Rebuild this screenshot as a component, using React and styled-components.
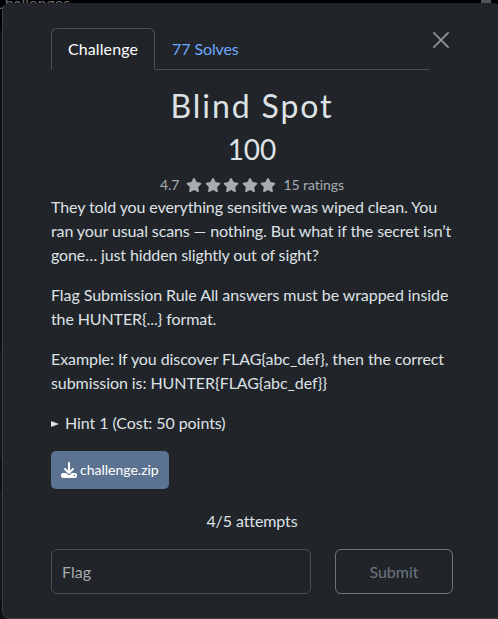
import React from "react";
import styled, { createGlobalStyle } from "styled-components";
import { FaStar, FaDownload } from "react-icons/fa6";

const GlobalStyle = createGlobalStyle`
  *, *::before, *::after { box-sizing: border-box; }
  html, body { margin: 0; height: 100%; overflow: hidden; background: #000; }
  body { font: 400 16px/24px Lato, sans-serif; color: #dee2e6; font-variant-ligatures: none; }
`;

const Page = styled.div`
  position: relative;
  width: 498px;
  height: 619px;
  overflow: hidden;
  background: #0e1011;
`;

const PageHeading = styled.div`
  height: 31px;
  text-indent: -6px;
  background: #000;
  color: #666;
  line-height: 6px;
`;

const Card = styled.div`
  width: 100%;
  height: ${(p) => p.$height}px;
  margin-bottom: ${(p) => p.$gap}px;
  background: ${(p) => (p.$dim ? "#0e1011" : "#16181b")};
`;

const ScrollThumb = styled.div`
  position: absolute;
  top: 0;
  right: 7px;
  width: 10px;
  height: 4px;
  background: #555;
`;

const Modal = styled.section`
  position: absolute;
  top: 3px;
  left: 2px;
  width: 500px;
  height: 616px;
  padding: 24px 48px;
  border: 1px solid #3b3d41;
  border-top-color: #212529;
  border-radius: 8px;
  background: #212529;
`;

const Header = styled.header`
  display: flex;
  height: 42px;
`;

const Tabs = styled.nav`
  display: flex;
  width: 378px;
  border-bottom: 1px solid #495057;
`;

const Tab = styled.a`
  height: 42px;
  padding: 8px 16px;
  border: 1px solid ${(p) => (p.$active ? "#495057" : "transparent")};
  border-bottom-color: ${(p) => (p.$active ? "#212529" : "transparent")};
  border-radius: 6px 6px 0 0;
  color: ${(p) => (p.$active ? "#fff" : "#6ea8fe")};
  letter-spacing: ${(p) => (p.$active ? "0.1px" : "-0.1px")};
`;

const Close = styled.button`
  width: 16px;
  height: 16px;
  margin: 4px 0 0 4px;
  padding: 0;
  border: 0;
  background: none;
  color: #909294;
  svg { display: block; }
`;

const Title = styled.h2`
  margin: 17px 0 7px;
  font-weight: 400;
  font-size: 32px;
  line-height: 38px;
  letter-spacing: 1.9px;
  text-align: center;
`;

const Points = styled.h3`
  margin: 0 0 8px;
  font-weight: 400;
  font-size: 28px;
  line-height: 34px;
  text-align: center;
`;

const Rating = styled.div`
  display: flex;
  align-items: center;
  justify-content: center;
  height: 21px;
  color: #a7acb1;
  font-size: 14px;
  line-height: 21px;
  letter-spacing: -0.07px;
`;

const Stars = styled.span`
  display: flex;
  gap: 2.5px;
  margin: 0 7px;
`;

const Text = styled.p`
  margin: 0 0 16px;
  white-space: nowrap;
`;

const Line = styled.span`
  display: block;
  letter-spacing: ${(p) => p.$tracking}px;
`;

const Hint = styled.details`
  margin-bottom: 16px;
`;

const Summary = styled.summary`
  display: flex;
  align-items: center;
  gap: 6px;
  list-style: none;
  letter-spacing: -0.07px;
  &::before {
    content: "";
    margin-top: 1px;
    border-left: 8px solid #dee2e6;
    border-top: 3.5px solid transparent;
    border-bottom: 3.5px solid transparent;
  }
`;

const FileButton = styled.a`
  display: flex;
  align-items: center;
  gap: 3px;
  width: 118px;
  height: 38px;
  padding: 0 10px;
  border-radius: 5px;
  background: #5b7290;
  color: #fff;
  font-size: 14px;
`;

const Attempts = styled.div`
  margin: 20px 0 16px;
  text-align: center;
  letter-spacing: -0.1px;
`;

const Form = styled.form`
  display: flex;
  gap: 24px;
`;

const FlagInput = styled.input`
  width: 260px;
  height: 45px;
  padding: 0 10px;
  border: 1px solid #495057;
  border-radius: 6px;
  background: #212529;
  color: #dee2e6;
  font: inherit;
  &::placeholder { color: #a6abaf; opacity: 1; }
`;

const Submit = styled.button`
  width: 118px;
  height: 45px;
  padding: 0;
  border: 1px solid #6c757d;
  border-radius: 6px;
  background: transparent;
  color: #6c757d;
  font: inherit;
`;

export default function App() {
  return (
    <>
      <GlobalStyle />
      <Page>
        <PageHeading>Challenges</PageHeading>
        <Card $dim $height={320} $gap={0} />
        <Card $height={108} $gap={32} />
        <Card $height={108} $gap={20} />
        <ScrollThumb />
        <Modal>
          <Header>
            <Tabs>
              <Tab $active>Challenge</Tab>
              <Tab>77 Solves</Tab>
            </Tabs>
            <Close aria-label="Close">
              <svg width="16" height="16" viewBox="0 0 16 16" stroke="currentColor" strokeWidth="1.8" strokeLinecap="round">
                <path d="M.9.9l14.2 14.2M15.1.9L.9 15.1" />
              </svg>
            </Close>
          </Header>
          <Title>Blind Spot</Title>
          <Points>100</Points>
          <Rating>
            4.7
            <Stars>
              {[1, 2, 3, 4, 5].map((n) => (
                <FaStar key={n} size={16} />
              ))}
            </Stars>
            15 ratings
          </Rating>
          <Text>
            <Line $tracking={-0.1}>They told you everything sensitive was wiped clean. You</Line>
            <Line $tracking={-0.11}>ran your usual scans — nothing. But what if the secret isn’t</Line>
            <Line $tracking={-0.12}>gone… just hidden slightly out of sight?</Line>
          </Text>
          <Text>
            <Line $tracking={-0.07}>Flag Submission Rule All answers must be wrapped inside</Line>
            <Line $tracking={-0.12}>the HUNTER&#123;...&#125; format.</Line>
          </Text>
          <Text>
            <Line $tracking={-0.08}>Example: If you discover FLAG&#123;abc_def&#125;, then the correct</Line>
            <Line $tracking={-0.07}>submission is: HUNTER&#123;FLAG&#123;abc_def&#125;&#125;</Line>
          </Text>
          <Hint>
            <Summary>Hint 1 (Cost: 50 points)</Summary>
          </Hint>
          <FileButton>
            <FaDownload size={16} />
            challenge.zip
          </FileButton>
          <Attempts>4/5 attempts</Attempts>
          <Form>
            <FlagInput placeholder="Flag" />
            <Submit type="button">Submit</Submit>
          </Form>
        </Modal>
      </Page>
    </>
  );
}
